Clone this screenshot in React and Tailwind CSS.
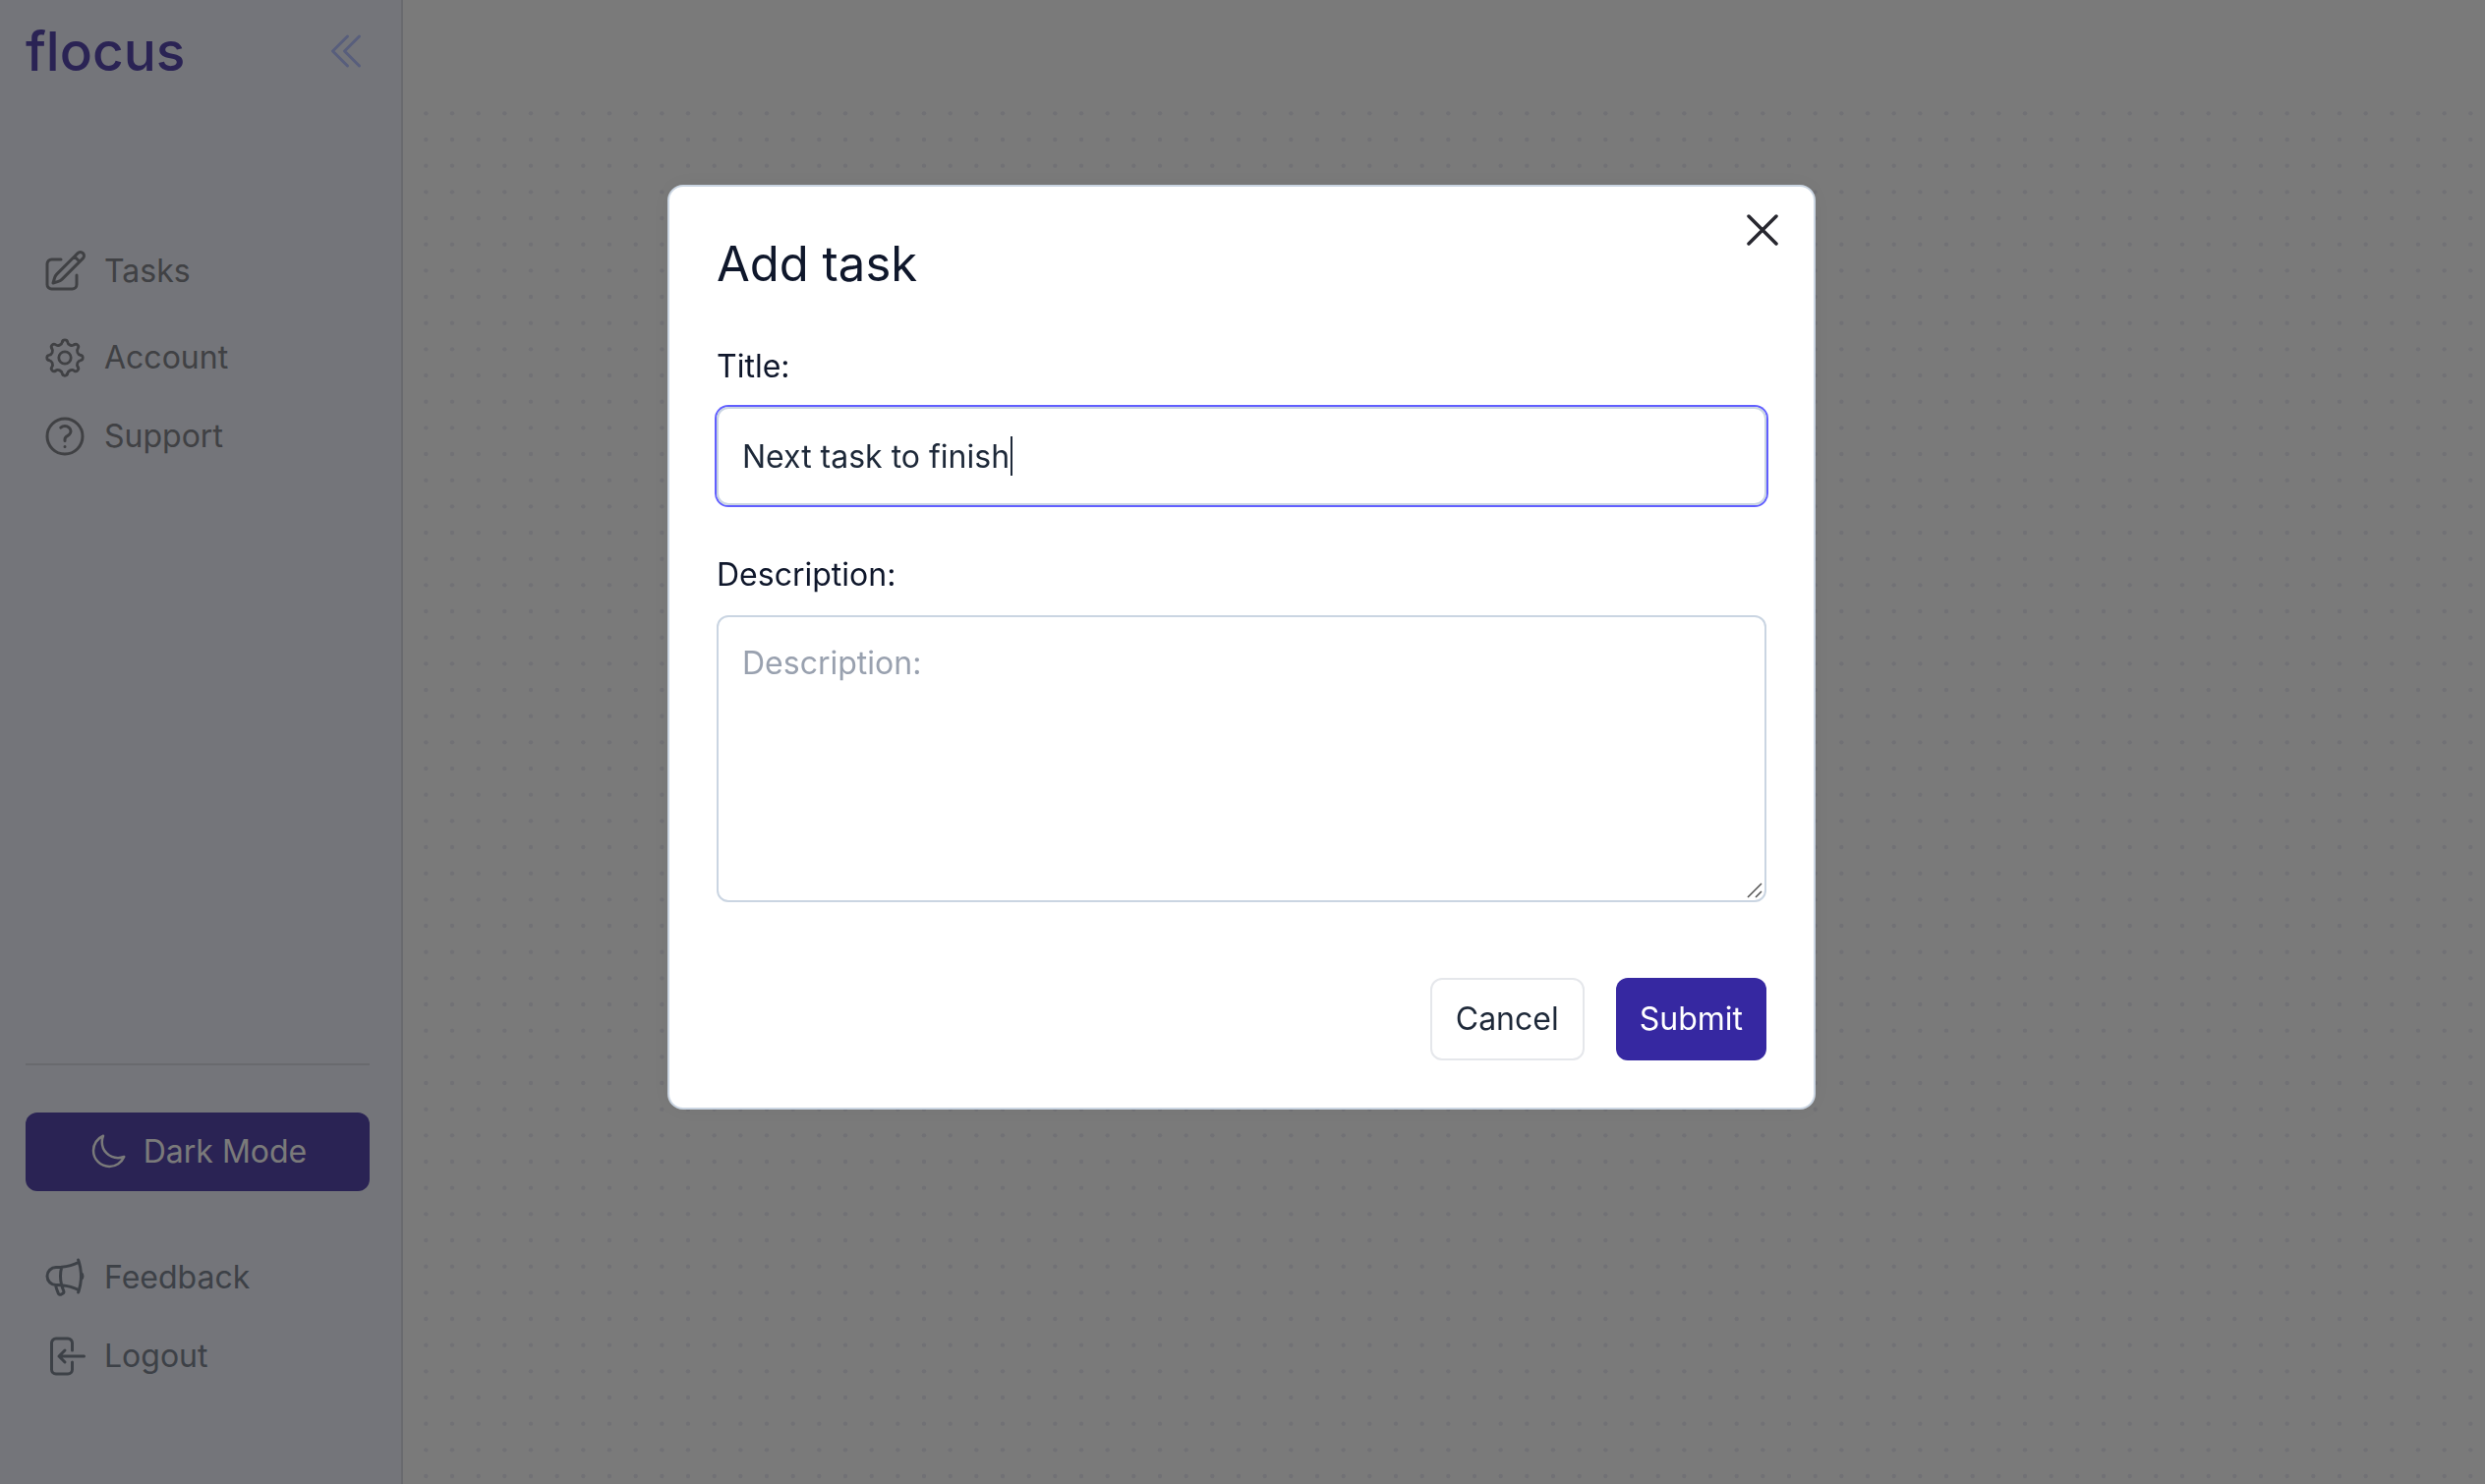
import React from "react";
import {
  HiOutlinePencilSquare,
  HiOutlineQuestionMarkCircle,
  HiOutlineMoon,
  HiOutlineMegaphone,
  HiOutlineArrowLeftOnRectangle,
  HiOutlineChevronDoubleLeft,
  HiOutlineXMark,
} from "react-icons/hi2";

const gearTeeth = [0, 45, 90, 135, 180, 225, 270, 315];

function GearIcon(props) {
  return (
    <svg viewBox="-24 -24 48 48" fill="none" stroke="currentColor" strokeWidth="2.8" strokeLinecap="round" {...props}>
      {gearTeeth.map((angle) => (
        <path
          key={angle}
          transform={`rotate(${angle})`}
          d="M-2.6 -16.2C-2.3 -18.9 2.3 -18.9 2.6 -16.2C3.1 -13 7 -11.4 9.62 -13.3"
        />
      ))}
      <circle r="6.2" />
    </svg>
  );
}

function NavItem({ icon: Icon, label, tone = "" }) {
  return (
    <a href="#" className={`flex h-20 items-center gap-4 pl-4 ${tone}`}>
      <Icon className="size-12 shrink-0" aria-hidden="true" />
      {label}
    </a>
  );
}

const dotOffsets = [13.33, 40, 66.67];

function DotGrid() {
  return (
    <svg className="h-full w-full" aria-hidden="true">
      <defs>
        <pattern id="dots" width="80" height="80" patternUnits="userSpaceOnUse">
          {dotOffsets.map((y) =>
            dotOffsets.map((x) => <circle key={`${x}-${y}`} cx={x} cy={y} r="2.2" fill="#e2e2ea" />)
          )}
        </pattern>
      </defs>
      <rect width="100%" height="100%" fill="url(#dots)" />
    </svg>
  );
}

function Sidebar() {
  return (
    <aside className="flex w-[410px] shrink-0 flex-col border-r-2 border-[#d2d4dc] bg-[#e8eaf4] pr-8 pl-[26px]">
      <div className="flex h-[104px] items-center justify-between">
        <span className="text-[55px] font-medium text-[#5446a8]">flocus</span>
        <button type="button" aria-label="Collapse sidebar" className="text-[#b0bcf8]">
          <HiOutlineChevronDoubleLeft className="size-12" />
        </button>
      </div>
      <nav className="mt-[132px] flex flex-col text-[#808288]">
        <NavItem icon={HiOutlinePencilSquare} label="Tasks" tone="mb-2" />
        <NavItem icon={GearIcon} label="Account" />
        <NavItem icon={HiOutlineQuestionMarkCircle} label="Support" />
      </nav>
      <div className="mt-auto border-t-2 border-[#d2d4dc] pt-12 pb-[90px]">
        <button type="button" className="mb-12 flex h-20 w-full items-center justify-center gap-4 rounded-xl bg-[#5446a8] text-[#f4f4f4]">
          <HiOutlineMoon className="size-10" aria-hidden="true" />
          Dark Mode
        </button>
        <NavItem icon={HiOutlineMegaphone} label="Feedback" tone="text-[#7a828e]" />
        <NavItem icon={HiOutlineArrowLeftOnRectangle} label="Logout" tone="text-[#7a828e]" />
      </div>
    </aside>
  );
}

function AddTaskDialog() {
  return (
    <form
      role="dialog"
      aria-modal="true"
      aria-labelledby="dialog-title"
      className="relative w-full max-w-[1168px] rounded-2xl border-2 border-slate-300 bg-white p-12 text-slate-900 shadow-[0_0_24px_0_rgba(0,0,0,0.05)]"
    >
      <button type="button" aria-label="Close" className="absolute top-4 right-6 text-[#27272f]">
        <HiOutlineXMark className="size-14" />
      </button>
      <h2 id="dialog-title" className="mb-12 text-[49px] leading-[62px]">Add task</h2>
      <label htmlFor="title" className="mb-4 block">Title:</label>
      <div className="relative mb-[46px]">
        <input
          id="title"
          type="text"
          defaultValue="Next task to finish"
          className="block h-[100px] w-full rounded-xl border-2 border-slate-300 px-6 text-gray-800 ring-2 ring-indigo-500 outline-none"
        />
        <span className="absolute top-[30px] left-[299px] h-10 w-0.5 bg-gray-800" />
      </div>
      <label htmlFor="description" className="mb-4 block">Description:</label>
      <div className="relative">
        <textarea
          id="description"
          placeholder="Description:"
          className="block h-[292px] w-full resize-none rounded-xl border-2 border-slate-300 px-6 py-[22px] text-gray-800 placeholder:text-gray-400"
        />
        <svg
          viewBox="0 0 16 16"
          className="pointer-events-none absolute right-1 bottom-1 size-4 text-[#505050]"
          fill="none"
          stroke="currentColor"
          strokeWidth="1.5"
          aria-hidden="true"
        >
          <path d="M1 15L15 1M9 15l6-6" />
        </svg>
      </div>
      <div className="mt-[77px] flex justify-end gap-8">
        <button type="button" className="h-[84px] rounded-xl border-2 border-gray-200 px-6 text-gray-800">Cancel</button>
        <button type="submit" className="h-[84px] rounded-xl bg-[#3628a1] px-6 text-white">Submit</button>
      </div>
    </form>
  );
}

export default function App() {
  return (
    <div className="font-[Inter,sans-serif] text-[32px] leading-[50px]">
      <div className="flex min-h-screen bg-[#f5f5f5]">
        <Sidebar />
        <main className="flex min-w-0 flex-1 pt-[102px] pl-[10px]">
          <DotGrid />
        </main>
      </div>
      <div className="fixed inset-0 flex items-start justify-center bg-black/50 pt-[188px] pr-0.5">
        <AddTaskDialog />
      </div>
    </div>
  );
}
